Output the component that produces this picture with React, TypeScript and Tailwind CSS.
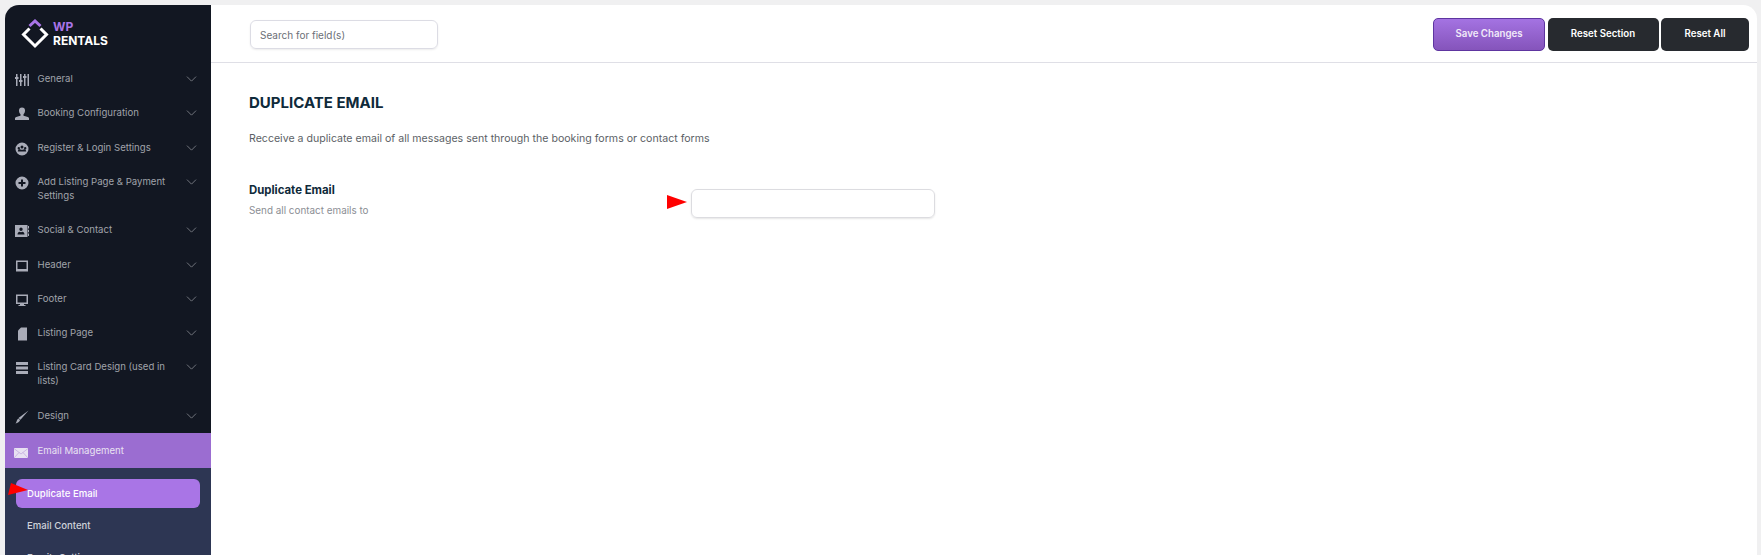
import { useState } from "react";

const FONT = "font-['Inter','Liberation_Sans',sans-serif]";

const ITEMS = [
  { label: "General", icon: "sliders" },
  { label: "Booking Configuration", icon: "user" },
  { label: "Register & Login Settings", icon: "group" },
  { label: "Add Listing Page & Payment Settings", icon: "plus" },
  { label: "Social & Contact", icon: "contact" },
  { label: "Header", icon: "laptop" },
  { label: "Footer", icon: "desktop" },
  { label: "Listing Page", icon: "page" },
  { label: "Listing Card Design (used in lists)", icon: "menu" },
  { label: "Design", icon: "brush" },
];

function Icon({ name }: { name: string }) {
  return (
    <svg viewBox="0 0 14 14" className="mt-[1px] h-[14px] w-[14px] fill-[#a9acb8]">
      {name === "sliders" && (
        <path d="M1 1h1.500v3H3.500v2H2.500v7H1V6H0V4h1zM5 1h1.500v6h1v2h-1v4H5V9H4V7h1zM9 1h1.500v2h1v2h-1v8H9V5H8V3h1zM12.500 1H14v12h-1.500z" />
      )}
      {name === "user" && (
        <path d="M4 3.500a3 3 0 1 1 6 0c0 1.600-.6 3-1.500 3.800v1.400c2.500.5 5 1.200 5.500 2.300V13H0v-2c.5-1.100 3-1.800 5.500-2.300V7.300C4.600 6.500 4 5.100 4 3.500z" />
      )}
      {name === "group" && (
        <path
          fillRule="evenodd"
          d="M7 .5a6.500 6.500 0 1 1 0 13 6.500 6.500 0 0 1 0-13zM7 3.500a1.500 1.500 0 1 0 0 3 1.500 1.500 0 0 0 0-3zM3.800 5a1.200 1.200 0 1 0 0 2.400A1.200 1.200 0 0 0 3.800 5zm6.400 0a1.200 1.200 0 1 0 0 2.400 1.200 1.200 0 0 0 0-2.400zM5 7.200c-1 .2-2.200.6-2.200 2.400h8.400c0-1.800-1.200-2.200-2.200-2.400-.5.400-1.300.6-2 .6s-1.500-.2-2-.6z"
        />
      )}
      {name === "plus" && (
        <path
          fillRule="evenodd"
          d="M7 .5a6.500 6.500 0 1 1 0 13 6.500 6.500 0 0 1 0-13zM6 3.500V6H3.500v2H6v2.500h2V8h2.500V6H8V3.500z"
        />
      )}
      {name === "contact" && (
        <path
          fillRule="evenodd"
          d="M0 1h12.500v12H0zM6 3.500a1.700 1.700 0 1 0 0 3.400 1.700 1.700 0 0 0 0-3.400zM2.500 10.500h7c0-1.600-.8-2.500-2-2.800L6 8.200l-1.500-.5c-1.200.3-2 1.200-2 2.800zM13 2h1v2.500h-1zM13 5.700h1v2.500h-1zM13 9.500h1V12h-1z"
        />
      )}
      {name === "laptop" && <path fillRule="evenodd" d="M1 1.500h12v11H1zM2.500 3v7h9V3z" />}
      {name === "desktop" && (
        <path fillRule="evenodd" d="M1 1.500h12V11H9v1h1.500v1h-7v-1H5v-1H1zM2.500 3v6.500h9V3z" />
      )}
      {name === "page" && <path d="M6 .5h6v13H3V3.500z" />}
      {name === "menu" && <path d="M1 1h12v3H1zM1 5.500h12v3H1zM1 10h12v3H1z" />}
      {name === "brush" && <path d="M13.500.5 5.500 9.800 3.500 8zM3.200 8.400l1.900 1.700c-.5 1.800-2.500 3.100-4.600 3.400 1.300-1.200 1-3.800 2.700-5.100z" />}
    </svg>
  );
}

function Chevron() {
  return (
    <svg viewBox="0 0 12 7" className="mt-[4px] h-[6px] w-[11px] shrink-0 fill-none stroke-[#8d9098]">
      <path d="M.7.7 6 6l5.300-5.300" strokeWidth="0.9" />
    </svg>
  );
}

function NavRow({ label, icon }: { label: string; icon: string }) {
  return (
    <div className="flex items-start py-[10.15px] pl-[10px] pr-[14px] text-[9.6px] leading-[14px] text-[#a0a3aa]">
      <span className="h-[14px] w-[22.5px] shrink-0">
        <Icon name={icon} />
      </span>
      <span className="flex-1 pr-[8px]">{label}</span>
      <Chevron />
    </div>
  );
}

function RedArrow({ className }: { className: string }) {
  return (
    <svg viewBox="0 0 20 14" className={className}>
      <path d="M0 0 20 7 0 14z" fill="#ff0000" />
    </svg>
  );
}

function Logo() {
  return (
    <div className="flex h-[57px] items-center pl-[16px]">
      <svg viewBox="0 0 28 30" className="h-[30px] w-[28px]">
        <path d="M8.500 7 14 2l5.500 5" fill="none" stroke="#a974e8" strokeWidth="3" />
        <path d="M8.500 9.500 2.500 15.500 14 27l11.500-11.500-6-6" fill="none" stroke="#ffffff" strokeWidth="3" />
      </svg>
      <div className="ml-[4px] text-[12px] font-bold leading-[13.500px]">
        <div className="text-[#a974e8]">WP</div>
        <div className="text-white">RENTALS</div>
      </div>
    </div>
  );
}

export default function App() {
  const [query, setQuery] = useState("");
  const [email, setEmail] = useState("");

  return (
    <div className={`${FONT} h-[555px] overflow-hidden bg-[#f0f0f1] pl-[5px] pr-[4px] pt-[5px]`}>
      <div className="flex h-[550px] overflow-hidden rounded-tl-[14px] rounded-tr-[14px]">
        <aside className="w-[206px] shrink-0 bg-[#121722]">
          <Logo />
          {ITEMS.map((item) => (
            <NavRow key={item.label} {...item} />
          ))}
          <div className="flex h-[35px] items-center bg-[#9b6dd1] pl-[9px] pt-[1px] text-[9.6px] text-[#e9e3f2]">
            <svg viewBox="0 0 14 10" className="mr-[9.5px] mt-[4px] h-[10px] w-[14px]">
              <rect width="14" height="10" fill="#e8e1f2" />
              <path d="M0 .5 7 6l7-5.500M0 10l5-5.500M14 10 9 4.500" fill="none" stroke="#b79ad9" strokeWidth="0.6" />
            </svg>
            Email Management
          </div>
          <div className="h-full bg-[#2d3653] px-[11px] pt-[11px] text-[9.6px] font-medium">
            <div className="flex h-[29px] items-center rounded-[6px] bg-[#a975e6] pl-[11px] pt-[1px] text-white">
              Duplicate Email
            </div>
            <div className="flex h-[32px] items-center pl-[11px] pt-[4px] text-[#cfd2da]">Email Content</div>
            <div className="flex h-[32px] items-center pl-[11px] pt-[4px] text-[#cfd2da]">Emails Settings</div>
          </div>
        </aside>

        <main className="min-w-0 flex-1 bg-white">
          <header className="flex h-[58px] items-center justify-between border-b border-[#dfdfe6] pl-[39px] pr-[8px] pt-[2px]">
            <input
              value={query}
              onChange={(e) => setQuery(e.target.value)}
              placeholder="Search for field(s)"
              className="h-[29px] w-[188px] rounded-[6px] border border-[#dcdce4] px-[9px] text-[10px] text-[#555] shadow-[0_1px_2px_rgba(0,0,0,0.08)] outline-none placeholder:text-[#6b6f76]"
            />
            <div className="flex gap-[2.5px] text-[9.7px] font-semibold text-white">
              <button className="h-[33px] w-[112px] rounded-[5px] border border-[#5e35a0] bg-gradient-to-b from-[#a473e2] to-[#8554bb] text-[#f1eaf9]">
                Save Changes
              </button>
              <button className="h-[33px] w-[111px] rounded-[5px] bg-[#272a2f]">Reset Section</button>
              <button className="h-[33px] w-[88px] rounded-[5px] bg-[#272a2f]">Reset All</button>
            </div>
          </header>

          <section className="pl-[38px] pt-[31px]">
            <h1 className="text-[15px] font-bold leading-[18px] text-[#0f2a3a]">DUPLICATE EMAIL</h1>
            <p className="mt-[19px] text-[10.6px] leading-[16px] text-[#5c5f66]">
              Recceive a duplicate email of all messages sent through the booking forms or contact forms
            </p>
            <div className="mt-[36px] flex items-start">
              <div className="w-[442px] shrink-0">
                <div className="text-[11.4px] font-bold leading-[14px] text-[#0f2a3a]">Duplicate Email</div>
                <div className="mt-[6px] text-[9.900px] leading-[14px] text-[#8b8e94]">Send all contact emails to</div>
              </div>
              <input
                value={email}
                onChange={(e) => setEmail(e.target.value)}
                className="mt-[6px] h-[29px] w-[244px] rounded-[6px] border border-[#dcdce0] shadow-[0_1px_2px_rgba(0,0,0,0.1)] outline-none"
              />
            </div>
          </section>
        </main>
      </div>

      <RedArrow className="absolute left-[667px] top-[195px] h-[14px] w-[20px]" />
      <svg viewBox="0 0 20 12" className="absolute left-[8px] top-[483px] h-[12px] w-[20px]">
        <path d="M3 0 20 7 0 12z" fill="#ff0000" />
      </svg>
    </div>
  );
}
